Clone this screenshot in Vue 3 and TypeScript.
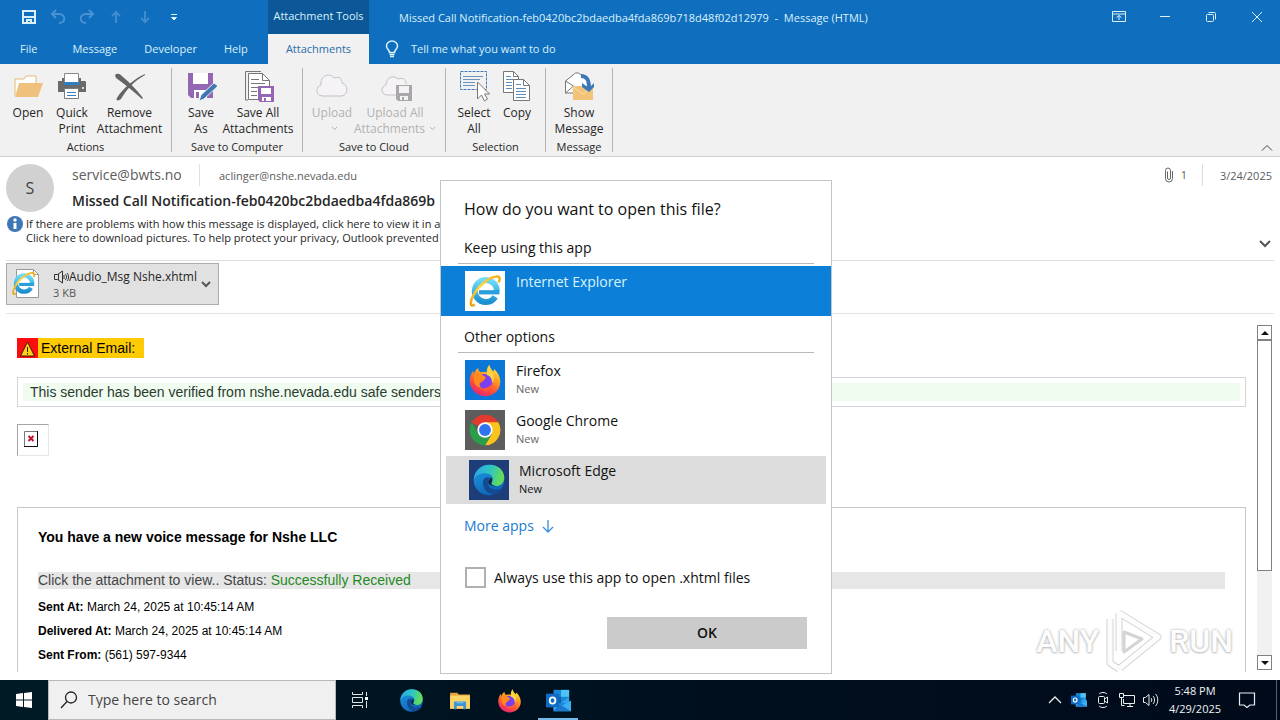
<script setup lang="ts">
import { ref } from 'vue'

interface RibbonItem {
  icon: string
  lines: string[]
  arrow?: boolean
  disabled?: boolean
}
interface RibbonGroup {
  id: string
  title: string
  items: RibbonItem[]
}
interface AppChoice {
  icon: string
  name: string
  hovered?: boolean
}

const tabs: string[] = ['File', 'Message', 'Developer', 'Help']

const groups: RibbonGroup[] = [
  {
    id: 'actions',
    title: 'Actions',
    items: [
      { icon: 'open', lines: ['Open'] },
      { icon: 'print', lines: ['Quick', 'Print'] },
      { icon: 'remove', lines: ['Remove', 'Attachment'] },
    ],
  },
  {
    id: 'computer',
    title: 'Save to Computer',
    items: [
      { icon: 'save', lines: ['Save', 'As'] },
      { icon: 'saveall', lines: ['Save All', 'Attachments'] },
    ],
  },
  {
    id: 'cloud',
    title: 'Save to Cloud',
    items: [
      { icon: 'upload', lines: ['Upload', ''], arrow: true, disabled: true },
      { icon: 'uploadall', lines: ['Upload All', 'Attachments'], arrow: true, disabled: true },
    ],
  },
  {
    id: 'selection',
    title: 'Selection',
    items: [
      { icon: 'select', lines: ['Select', 'All'] },
      { icon: 'copy', lines: ['Copy'] },
    ],
  },
  {
    id: 'message',
    title: 'Message',
    items: [{ icon: 'show', lines: ['Show', 'Message'] }],
  },
]

const details = [
  { label: 'Sent At:', value: 'March 24, 2025 at 10:45:14 AM' },
  { label: 'Delivered At:', value: 'March 24, 2025 at 10:45:14 AM' },
  { label: 'Sent From:', value: '(561) 597-9344' },
]

const otherApps: AppChoice[] = [
  { icon: 'firefox', name: 'Firefox' },
  { icon: 'chrome', name: 'Google Chrome' },
  { icon: 'edge', name: 'Microsoft Edge', hovered: true },
]

const pinned = [
  { icon: 'edge', name: 'Microsoft Edge' },
  { icon: 'folder', name: 'File Explorer' },
  { icon: 'firefox', name: 'Firefox' },
  { icon: 'outlook', name: 'Outlook', active: true },
]

const always = ref(false)
const query = ref('')
</script>

<template>
  <div class="desktop">
    <svg class="defs" width="0" height="0" aria-hidden="true">
      <defs>
        <linearGradient id="edgeTop" x1="0" y1="0.4" x2="1" y2="0.6">
          <stop offset="0" stop-color="#2aa9e6" />
          <stop offset="0.5" stop-color="#2fc5c0" />
          <stop offset="0.9" stop-color="#62dc5c" />
        </linearGradient>
        <linearGradient id="edgeBase" x1="0" y1="0" x2="0.6" y2="1">
          <stop offset="0" stop-color="#1d9de3" />
          <stop offset="1" stop-color="#0f62b6" />
        </linearGradient>
        <linearGradient id="foxBody" x1="0.8" y1="0" x2="0.3" y2="1">
          <stop offset="0" stop-color="#fff14a" />
          <stop offset="0.35" stop-color="#ffa51f" />
          <stop offset="0.7" stop-color="#ff4f38" />
          <stop offset="1" stop-color="#e8217a" />
        </linearGradient>
        <linearGradient id="ieBody" x1="0" y1="0" x2="0" y2="1">
          <stop offset="0" stop-color="#6fdcf8" />
          <stop offset="1" stop-color="#1c8fd0" />
        </linearGradient>
        <linearGradient id="ieRing" x1="0" y1="1" x2="1" y2="0">
          <stop offset="0" stop-color="#e9a412" />
          <stop offset="0.5" stop-color="#ffd94a" />
          <stop offset="1" stop-color="#f0ae1c" />
        </linearGradient>
      </defs>
      <symbol id="edge" viewBox="0 0 40 40">
        <circle cx="20" cy="20" r="18" fill="url(#edgeBase)" />
        <path d="M13 21c-1 9 5 16 13 16 5-1 9-4 11-8-7 4-16 3-18-4-1-3 0-6 2-8-4-1-7 1-8 4z" fill="#134a92" />
        <path d="M2 20C3 9 11 2 21 2c10 0 17 7 17 15 0 7-5 10-10 10-4 0-6-2-5-4 4-5 0-11-8-11C8 12 4 15 2 20z" fill="url(#edgeTop)" />
        <path d="M23 23c-1 2 1 4 5 4-4 1-8-1-9-4 0-3 2-5 4-6 1 2 1 4 0 6z" fill="#0b2740" />
      </symbol>
      <symbol id="firefox" viewBox="0 0 40 40">
        <path d="M25 2c1 4 3 6 5 8l1-3c5 5 7 10 7 15 0 10-8 17-18 17S2 31 2 21c0-5 2-9 4-12l1 4c1-3 2-5 5-7 0 3 1 4 3 5 2-1 5-1 7 0 0-4 1-7 3-9z" fill="url(#foxBody)" />
        <path d="M14 15c6-5 15-1 15 7 0 6-5 9-9 9-6 0-10-5-9-9 2 2 4 2 6 0l3-3c-1-1-4-1-6-4z" fill="#7a3ff0" />
        <path d="M7 14c3-2 6-2 9 0 2 1 4 1 5 3 0 2-5 2-6 5-2 2-2 5 1 7-6 0-9-5-9-9z" fill="#ff8a1e" />
        <path d="M14 29c6 2 13-1 15-6 1 7-5 11-10 10-2-1-4-2-5-4z" fill="#ff5a36" />
        <path d="M22 14c4 1 7 5 6 10 3-3 3-8 1-12-2-2-4-3-4-6-2 3-3 5-3 8z" fill="#ffe24a" opacity="0.8" />
      </symbol>
      <symbol id="chrome" viewBox="0 0 40 40">
        <path d="M20 20 4.400 11A18 18 0 0 1 35.600 11z" fill="#e33b2e" />
        <path d="M20 11h15.600A18 18 0 0 1 20 38l8-13z" fill="#fcc31e" />
        <path d="M4.400 11 12.200 24.500 20 29l7.800-4.500L20 38A18 18 0 0 1 4.400 11z" fill="#2a9d48" />
        <circle cx="20" cy="20" r="9" fill="#fff" />
        <circle cx="20" cy="20" r="7" fill="#2f74ee" />
      </symbol>
      <symbol id="ie" viewBox="0 0 40 40">
        <path d="M32 27a13 13 0 1 1 2-7" fill="none" stroke="url(#ieBody)" stroke-width="7" />
        <path d="M13 21.500h24" stroke="#2b9fdb" stroke-width="5" />
        <path d="M8 36c-6 4-6-4-1-12C13 13 25 4 33 3c5-1 5 3 3 7" fill="none" stroke="url(#ieRing)" stroke-width="3" />
      </symbol>
      <symbol id="folder" viewBox="0 0 40 40">
        <path d="M2 6h13l3 3h20v26H2z" fill="#e8a33a" />
        <path d="M2 11h36v24H2z" fill="#fbd667" />
        <path d="M9 36V24q0-2 2-2h18q2 0 2 2v12h-5v-6H14v6z" fill="#3e94d6" />
        <path d="M14 22h12v3H14z" fill="#74bdec" />
      </symbol>
      <symbol id="outlook" viewBox="0 0 40 40">
        <path d="M12 3h25v30H12z" fill="#1a86d8" />
        <path d="M24 3h13v11H24z" fill="#50c3f5" />
        <path d="M12 14h12v10H12z" fill="#0f5fb0" />
        <path d="M24 24h13V14z" fill="#2fa3ea" />
        <path d="M12 37h28V20L26 28 12 22z" fill="#3db1f0" />
        <path d="M12 37h28L22 26z" fill="#1b78cc" />
        <path d="M0 9h21v22H0z" fill="#0f6cc4" />
        <ellipse cx="10.500" cy="20" rx="4.500" ry="5" fill="none" stroke="#fff" stroke-width="3" />
      </symbol>
    </svg>

    <main class="window">
      <header class="titlebar">
        <div class="quick">
          <button type="button" aria-label="Save">
            <svg width="16" height="16" viewBox="0 0 16 16" fill="none" stroke="#d9f1fa" stroke-width="2"><path d="M2 2h12v12H2z" /><path d="M2 8h12" /><path d="M6 14v-3h4v3" /></svg>
          </button>
          <button type="button" aria-label="Undo">
            <svg width="16" height="16" viewBox="0 0 16 16" fill="none" stroke="#4a92d2" stroke-width="2"><path d="M6 1 2 5l4 4M2 5h7c7 0 7 9 0 9" /></svg>
          </button>
          <button type="button" aria-label="Redo">
            <svg width="16" height="16" viewBox="0 0 16 16" fill="none" stroke="#4a92d2" stroke-width="2"><path d="m10 1 4 4-4 4M14 5H7c-7 0-7 9 0 9" /></svg>
          </button>
          <button type="button" aria-label="Previous item">
            <svg width="16" height="16" viewBox="0 0 16 16" fill="none" stroke="#3f8bce" stroke-width="2"><path d="M8 14V3M4 7l4-4 4 4" /></svg>
          </button>
          <button type="button" aria-label="Next item">
            <svg width="16" height="16" viewBox="0 0 16 16" fill="none" stroke="#3f8bce" stroke-width="2"><path d="M8 2v11M4 9l4 4 4-4" /></svg>
          </button>
          <button type="button" aria-label="Customize toolbar">
            <svg width="16" height="16" viewBox="0 0 16 16"><path d="M5 5.500h6M5.500 8.500h5L8 11z" stroke="#d9f1fa" fill="#d9f1fa" /></svg>
          </button>
        </div>
        <div class="context">Attachment Tools</div>
        <h1 class="caption">Missed Call Notification-feb0420bc2bdaedba4fda869b718d48f02d12979&nbsp; -&nbsp; Message (HTML)</h1>
        <div class="winbuttons">
          <button type="button" aria-label="Ribbon display options">
            <svg width="14" height="12" viewBox="0 0 14 12" fill="none" stroke="#d9f1fa"><path d="M.5.500h13v10H.500zM.5 3h13M7 9V4.500M4.500 6.500 7 4.500l2.500 2" /></svg>
          </button>
          <button type="button" aria-label="Minimize">
            <svg width="12" height="12" viewBox="0 0 12 12" stroke="#d9f1fa"><path d="M1 5.500h10" /></svg>
          </button>
          <button type="button" aria-label="Restore">
            <svg width="12" height="12" viewBox="0 0 12 12" fill="none" stroke="#d9f1fa"><rect x="1.500" y="3.500" width="7" height="7" rx="1" /><path d="M3.500 1.500h6q1 0 1 1v6" /></svg>
          </button>
          <button type="button" aria-label="Close">
            <svg width="12" height="12" viewBox="0 0 12 12" stroke="#d9f1fa"><path d="m1 1 10 10M11 1 1 11" /></svg>
          </button>
        </div>
      </header>

      <nav class="tabs">
        <div class="tabset">
          <button v-for="t in tabs" :key="t" type="button" class="tab">{{ t }}</button>
        </div>
        <button type="button" class="current">Attachments</button>
        <button type="button" class="tell">
          <svg width="14" height="18" viewBox="0 0 14 18" fill="none" stroke="#d9f1fa" stroke-width="1.500"><path d="M4.500 12.500c0-2.500-3-3.500-3-6.500a5.500 5 0 0 1 11 0c0 3-3 4-3 6.500zM4.500 14.500h5M5 16.500h4" /></svg>
          Tell me what you want to do
        </button>
      </nav>

      <section class="ribbon">
        <div v-for="g in groups" :key="g.id" class="group" :class="g.id">
          <div class="items">
            <button v-for="i in g.items" :key="i.icon" type="button" class="item" :disabled="i.disabled">
              <svg width="32" height="32" viewBox="0 0 32 32" fill="none">
                <template v-if="i.icon === 'open'">
                  <path d="M3 26V9h9l2-3h10v9" fill="#fff" stroke="#e5b878" />
                  <path d="M7 13h24l-5 14H3z" fill="#efc17c" />
                </template>
                <template v-else-if="i.icon === 'print'">
                  <path d="M8.500 3.500h14v9h-14z" fill="#fff" stroke="#8a8a8a" />
                  <path d="M2 11h4V8h2v4h15V8h2v3h4q1 0 1 1v10H2z" fill="#6a6a6a" />
                  <path d="M8 12h15v3H8z" fill="#2f7dc4" />
                  <path d="M8.500 18.500h14v10h-14z" fill="#fff" stroke="#7a7a7a" />
                  <path d="M11 22.500h9M11 25.500h9" stroke="#3a7cc0" />
                  <circle cx="27" cy="18" r="1" fill="#fff" />
                </template>
                <template v-else-if="i.icon === 'remove'">
                  <path d="M1 5c3-3 6 0 8 2 7 6 13 12 20 21l-1 1C20 22 12 15 2 8z" fill="#646464" />
                  <path d="M31 4C20 9 8 19 3 28c-2 3 2 3 4 1C12 20 20 11 31 5z" fill="#646464" />
                </template>
                <template v-else-if="i.icon === 'save'">
                  <path d="M3 3h25v25H6l-3-3z" fill="#9466b4" />
                  <path d="M8 3h15v11H8z" fill="#fff" />
                  <path d="M9 20h13v8H9z" fill="#fff" />
                  <path d="M11 22h3v6h-3z" fill="#9466b4" />
                  <path d="m29 13 4 3-14 13-5 2 2-6z" fill="#3f79b3" stroke="#f1f1f1" />
                </template>
                <template v-else-if="i.icon === 'saveall'">
                  <path d="M6 30H3.500V1.500H19" stroke="#777" />
                  <path d="M6.500 3.500h14l7 7v19h-21z" fill="#fff" stroke="#777" />
                  <path d="M20.500 3.500v7h7M9 9.500h8M9 13.500h14M9 17.500h8M9 21.500h6M9 25.500h6" stroke="#777" />
                  <path d="M16 16h16v16H18l-2-2z" fill="#9466b4" />
                  <path d="M19 18h10v6H19zM20 27h9v4h-9z" fill="#fff" />
                  <path d="M22 28h2v4h-2z" fill="#9466b4" />
                </template>
                <template v-else-if="i.icon === 'upload'">
                  <path d="M6 26C-1 25 0 16 5 15 4 6 13 2 18 8c6-2 8 1 8 5 7 2 6 12 0 13z" fill="#f5f3f6" stroke="#c6c0c8" />
                </template>
                <template v-else-if="i.icon === 'uploadall'">
                  <path d="M17 25H8c-7-1-6-9-1-10C7 8 14 4 19 9c6-2 8 1 8 5" fill="#f5f3f6" stroke="#c6c0c8" />
                  <path d="M17 15h16v16H19l-2-2z" fill="#aaa6ab" />
                  <path d="M20 16h10v7H20zM21 26h8v4h-8z" fill="#f3f3f3" />
                  <path d="M23 27h2v4h-2z" fill="#aaa6ab" />
                </template>
                <template v-else-if="i.icon === 'select'">
                  <path d="M2.500 1.500h26v18h-26z" stroke="#3f78b4" stroke-dasharray="3 1" />
                  <path d="M5 6.500h20M5 9.500h17M5 12.500h12M5 15.500h12" stroke="#6c94bd" />
                  <path d="M19.500 12v17l4-4 3 6 3-2-3-5h5z" fill="#fff" stroke="#777" />
                </template>
                <template v-else-if="i.icon === 'copy'">
                  <path d="M2.500 1.500h10l5 5v16h-15z" fill="#fff" stroke="#777" />
                  <path d="M12.500 1.500v5h5" stroke="#777" />
                  <path d="M5 6.500h5M5 9.500h8M5 12.500h6M5 15.500h6M5 18.500h6" stroke="#5b8cbd" />
                  <path d="M12.500 9.500h10l6 6v15h-16z" fill="#fff" stroke="#777" />
                  <path d="M22.500 9.500v6h6" stroke="#777" />
                  <path d="M15 14.500h5M15 18.500h10M15 21.500h10M15 24.500h10M15 27.500h10" stroke="#5b8cbd" />
                </template>
                <template v-else>
                  <path d="M2.500 23V11l10-8h3l9 7v13z" fill="#fff" stroke="#777" />
                  <path d="m2.500 23 8-7M2.500 11l8 5" stroke="#777" />
                  <path d="M10 16h20v14H10z" fill="#f3c478" />
                  <path d="m10 17 10 7 10-7" stroke="#f8dca8" />
                  <path d="M18 6c6 0 8 4 8 12" stroke="#3a78b8" stroke-width="4" />
                  <path d="m19 13 7 5 5-5v4l-5 5-7-5z" fill="#3a78b8" />
                </template>
              </svg>
              <span v-for="(l, n) in i.lines" :key="n" class="line">{{ l }}<svg v-if="i.arrow && n === 1" class="drop" width="7" height="5" viewBox="0 0 7 5"><path d="m1 1 2.500 2.500L6 1" fill="none" stroke="currentColor" /></svg></span>
            </button>
          </div>
          <div class="grouptitle">{{ g.title }}</div>
        </div>
        <button type="button" class="collapse" aria-label="Collapse the ribbon">
          <svg width="12" height="8" viewBox="0 0 12 8" fill="none" stroke="#444"><path d="m1 6.500 5-5 5 5" /></svg>
        </button>
      </section>

      <section class="mailhead">
        <div class="avatar">S</div>
        <div class="people">
          <div class="fromline">
            <span class="from">service@bwts.no</span>
            <span class="to">aclinger@nshe.nevada.edu</span>
            <span class="count">
              <svg width="10" height="16" viewBox="0 0 10 16" fill="none" stroke="#666"><path d="M3.500 4.500v6.500a1.500 1.500 0 0 0 3 0V3.500a2.500 2.500 0 0 0-5 0v8a3.500 3.500 0 0 0 7 0V4" /></svg>
              1
            </span>
            <time class="date">3/24/2025</time>
          </div>
          <h2 class="subject">Missed Call Notification-feb0420bc2bdaedba4fda869b</h2>
        </div>
      </section>
      <section class="info">
        <svg width="18" height="18" viewBox="0 0 18 18"><circle cx="9" cy="9" r="8" fill="#3f76b5" /><path d="M9 8v6" stroke="#fff" stroke-width="3" /><circle cx="9" cy="5" r="1.700" fill="#fff" /></svg>
        <p>If there are problems with how this message is displayed, click here to view it in a<br />Click here to download pictures. To help protect your privacy, Outlook prevented</p>
        <button type="button" aria-label="Expand header">
          <svg width="12" height="8" viewBox="0 0 12 8" fill="none" stroke="#555" stroke-width="2"><path d="m1 1 5 5 5-5" /></svg>
        </button>
      </section>
      <section class="attachments">
        <button type="button" class="file">
          <svg class="fileicon" width="32" height="32" viewBox="0 0 32 32">
            <path d="M5.500 1.500h17l5 5v23h-22z" fill="#fff" stroke="#999" />
            <path d="M22.500 1.500v5h5" fill="none" stroke="#999" />
            <use href="#ie" x="0" y="3" width="25" height="25" />
          </svg>
          <span class="filetext">
            <span class="filename">
              <svg width="16" height="14" viewBox="0 0 16 14" fill="none" stroke="#333"><path d="M4.500 4.500h-3v5h3l5 3.500V1zM5.500 4v6M12 4c2 1 2 5 0 6M11 5v4M14 3c2 2 2 6 0 8" /></svg>Audio_Msg Nshe.xhtml
            </span>
            <span class="size">3 KB</span>
          </span>
          <svg width="10" height="7" viewBox="0 0 10 7" fill="none" stroke="#555" stroke-width="2"><path d="m1 1 4 4 4-4" /></svg>
        </button>
      </section>

      <section class="reading">
        <article class="mail">
          <p class="external"><svg width="21" height="20" viewBox="0 0 21 20"><path d="M0 0h21v20H0z" fill="#fb0d0d" /><path d="m10.500 4 7 14h-14z" fill="#ffd21a" stroke="#3d1a00" /><path d="M10.500 9v5M10.500 15v1.500" stroke="#3d1a00" /></svg><span>External Email:</span></p>
          <div class="verified"><p>This sender has been verified from nshe.nevada.edu safe senders</p></div>
          <div class="missing">
            <svg width="14" height="16" viewBox="0 0 14 16"><path d="M.5.500h13v15H.500z" fill="#fff" stroke="#777" /><path d="M0 15.500h13.500V0" fill="none" stroke="#111" /><path d="m4.500 5 5 5M9.500 5l-5 5" stroke="#c0142c" stroke-width="2" /></svg>
          </div>
          <div class="voice">
            <h3>You have a new voice message for Nshe LLC</h3>
            <p class="status">Click the attachment to view.. Status: <span>Successfully Received</span></p>
            <p v-for="d in details" :key="d.label" class="detail"><b>{{ d.label }}</b> {{ d.value }}</p>
          </div>
        </article>
        <div class="scroll">
          <button type="button" aria-label="Scroll up"><svg width="8" height="4" viewBox="0 0 8 4"><path d="M4 0 8 4H0z" fill="#111" /></svg></button>
          <div class="thumb"></div>
          <div class="track"></div>
          <button type="button" aria-label="Scroll down"><svg width="8" height="4" viewBox="0 0 8 4"><path d="M0 0h8L4 4z" fill="#111" /></svg></button>
        </div>
      </section>

      <div class="watermark">
        <span>ANY</span>
        <svg width="58" height="64" viewBox="0 0 58 64" fill="none" stroke-linejoin="round">
          <g stroke="#d4d4d4" stroke-width="7"><path d="M14 4v38M14 4l39 24-38 31M5 10v44l9 6" /><path d="M19 23v20l18-13z" stroke-width="3" /></g>
          <g stroke="#fdfdfd" stroke-width="5"><path d="M14 4v38M14 4l39 24-38 31M5 10v44l9 6" /></g>
        </svg>
        <span>RUN</span>
      </div>
    </main>

    <div class="dialog" role="dialog" aria-labelledby="ask">
      <h2 id="ask">How do you want to open this file?</h2>
      <h3>Keep using this app</h3>
      <button type="button" class="app chosen">
        <span class="tile ie"><svg width="34" height="34"><use href="#ie" /></svg></span>
        <span class="appname">Internet Explorer</span>
      </button>
      <h3 class="second">Other options</h3>
      <button v-for="a in otherApps" :key="a.name" type="button" class="app" :class="{ hovered: a.hovered }">
        <span class="tile" :class="a.icon"><svg width="34" height="34"><use :href="'#' + a.icon" /></svg></span>
        <span class="appname">{{ a.name }}<small>New</small></span>
      </button>
      <a href="#" class="more">More apps
        <svg width="12" height="14" viewBox="0 0 12 14" fill="none" stroke="#3a8ed8" stroke-width="1.300"><path d="M6 1v12M1 8l5 5 5-5" /></svg>
      </a>
      <label class="always"><input v-model="always" type="checkbox" />Always use this app to open .xhtml files</label>
      <button type="button" class="ok">OK</button>
    </div>

    <footer class="taskbar">
      <button type="button" class="start" aria-label="Start">
        <svg width="16" height="16" viewBox="0 0 16 16" fill="#fff"><path d="m0 2 7-1v6.500H0zM8 1l8-1v7.500H8zM0 8.500h7V15l-7-1zM8 8.500h8V16l-8-1z" /></svg>
      </button>
      <label class="search">
        <svg width="18" height="18" viewBox="0 0 18 18" fill="none" stroke="#222"><circle cx="11" cy="6.500" r="5.500" stroke-width="1.300" /><path d="m7 10.500-6 6.500" stroke-width="1.300" /></svg>
        <input v-model="query" type="text" placeholder="Type here to search" aria-label="Type here to search" />
      </label>
      <button type="button" class="pin view" aria-label="Task View">
        <svg width="18" height="18" viewBox="0 0 18 18" fill="none" stroke="#dfe6ea"><path d="M1.500 1v2.500h10V1M1.500 17v-2.500h10V17M1.500 6.500h10v5h-10zM15.500 1v4M15.500 10v7" /><path d="M14 6h3v3h-3z" fill="#fff" stroke="none" /></svg>
      </button>
      <button v-for="p in pinned" :key="p.name" type="button" class="pin" :class="{ active: p.active }" :aria-label="p.name">
        <svg :width="p.icon === 'folder' ? 22 : 25" height="25"><use :href="'#' + p.icon" /></svg>
      </button>
      <div class="tray">
        <svg width="24" height="16" viewBox="0 0 24 16" fill="none" stroke="#e8edf0" stroke-width="1.300"><path d="m6 11 6-6 6 6" /></svg>
        <svg width="24" height="16" viewBox="0 0 24 16"><use href="#outlook" x="4" y="0" width="16" height="16" /></svg>
        <svg width="24" height="18" viewBox="0 0 24 18" fill="none" stroke="#e8edf0"><rect x="7.500" y="5.500" width="6" height="7" rx="1" /><path d="m13.500 8 3-2v6l-3-2M8 3c2-2 6-2 8 0M8 15c2 2 6 2 8 0" /></svg>
        <svg width="24" height="16" viewBox="0 0 24 16" fill="none" stroke="#e8edf0"><path d="M9 3.500h10.500v8H8.500V7M12 14.500h6M15 11.500v3M4.500 1.500h4v4h-4zM6.500 5.500v8h3" /></svg>
        <svg width="24" height="16" viewBox="0 0 24 16" fill="none" stroke="#e8edf0"><path d="M4.500 5.500h2L10 2.500v11l-3.500-3h-2zM12 6c1 1 1 3 0 4M14 4c2 2 2 6 0 8M16.500 2c3 3 3 9 0 12" /></svg>
        <time class="clock">5:48 PM<br />4/29/2025</time>
        <button type="button" aria-label="Notifications">
          <svg width="18" height="16" viewBox="0 0 18 16" fill="none" stroke="#e8edf0" stroke-width="1.200"><path d="M1.500 1h15v12H12l-3 2.500L6 13H1.500z" /></svg>
        </button>
      </div>
    </footer>
  </div>
</template>

<style>
body {
  margin: 0;
}
</style>

<style scoped>
* {
  box-sizing: border-box;
}
h1, h2, h3, p {
  margin: 0;
  font-weight: 400;
}
button {
  border: 0;
  padding: 0;
  background: none;
  color: inherit;
  font: inherit;
}
svg {
  flex: none;
}
.defs {
  position: absolute;
}
.desktop {
  position: relative;
  display: flex;
  flex-direction: column;
  min-height: 100vh;
  background: #fff;
  color: #262626;
  font-family: "Open Sans", "Noto Sans", sans-serif;
  font-size: 11px;
  line-height: 16px;
}
.window {
  position: relative;
  flex: 1;
  display: flex;
  flex-direction: column;
}
.titlebar {
  display: flex;
  align-items: center;
  height: 34px;
  background: #106ebe;
  color: #d9f1fa;
}
.quick {
  display: flex;
  gap: 13px;
  width: 268px;
  padding-left: 21px;
}
.quick button {
  display: flex;
}
.context {
  width: 101px;
  height: 34px;
  background: #0b5798;
  line-height: 32px;
  text-align: center;
  white-space: nowrap;
}
.caption {
  flex: 1;
  padding: 2px 0 0 30px;
  font-size: 11px;
  white-space: nowrap;
}
.winbuttons {
  display: flex;
  height: 30px;
}
.winbuttons button {
  display: flex;
  align-items: center;
  justify-content: center;
  width: 46px;
}
.tabs {
  display: flex;
  height: 30px;
  background: #106ebe;
  color: #d9f1fa;
}
.tabset {
  display: flex;
  gap: 27px;
  width: 268px;
  padding-left: 20px;
}
.tab:first-child {
  margin-right: 8px;
}
.current {
  width: 101px;
  background: #f1f1f1;
  color: #2a6cab;
}
.tell {
  display: flex;
  align-items: center;
  gap: 12px;
  padding-left: 16px;
}
.ribbon {
  display: flex;
  height: 93px;
  padding: 4px 0;
  border-bottom: 1px solid #cfcfcf;
  background: #f1f1f1;
}
.group {
  display: flex;
  flex-direction: column;
  justify-content: space-between;
  border-right: 1px solid #b4b4b4;
}
.items {
  display: grid;
  padding: 2px 8px 0;
}
.actions .items {
  grid-template-columns: 40px 48px 67px;
}
.computer .items {
  grid-template-columns: 42px 72px;
}
.cloud .items {
  grid-template-columns: 42px 84px;
}
.selection .items {
  grid-template-columns: 40px 46px;
  padding-right: 5px;
}
.message .items {
  grid-template-columns: 50px;
}
.item {
  display: flex;
  flex-direction: column;
  align-items: center;
  font-size: 12px;
  white-space: nowrap;
}
.item > svg {
  margin-bottom: 3px;
  overflow: visible;
}
.item:disabled {
  color: #b1b1b1;
}
.line {
  height: 16px;
}
.drop {
  margin-left: 4px;
  vertical-align: 2px;
}
.grouptitle {
  line-height: 10px;
  text-align: center;
}
.collapse {
  align-self: flex-end;
  margin-left: auto;
  padding-right: 7px;
}
.collapse svg {
  display: block;
}
.mailhead {
  display: flex;
  gap: 18px;
  height: 58px;
  padding: 7px 8px 0 6px;
}
.avatar {
  flex: none;
  width: 48px;
  height: 48px;
  border-radius: 50%;
  background: #d1d1d1;
  color: #444;
  font-size: 16px;
  line-height: 48px;
  text-align: center;
}
.people {
  flex: 1;
}
.fromline {
  display: flex;
  height: 22px;
  color: #5c5c5c;
  line-height: 24px;
}
.from {
  width: 128px;
  border-right: 1px solid #e1e1e1;
  font-size: 14px;
  line-height: 22px;
}
.to {
  flex: 1;
  padding-left: 19px;
}
.count {
  display: flex;
  align-items: center;
  gap: 7px;
  padding-right: 15px;
  border-right: 1px solid #dcdcdc;
}
.date {
  width: 69px;
  text-align: right;
}
.subject {
  margin-top: 4px;
  font-size: 14px;
  font-weight: 600;
  line-height: 22px;
}
.info {
  display: flex;
  gap: 2px;
  height: 46px;
  margin: 0 6px;
  border-bottom: 1px solid #dedede;
}
.info p {
  flex: 1;
  padding-top: 2px;
  line-height: 14px;
}
.info button {
  display: flex;
  padding: 25px 3px 0;
}
.attachments {
  height: 53px;
  margin: 0 6px;
  padding-top: 2px;
  border-bottom: 1px solid #e4e4e4;
}
.file {
  display: flex;
  align-items: center;
  width: 213px;
  height: 42px;
  padding: 0 7px 0 4px;
  border: 1px solid #adadad;
  background: #e1e1e1;
  text-align: left;
}
.filetext {
  flex: 1;
  display: grid;
  padding: 1px 0 0 10px;
  font-size: 12px;
}
.filename {
  display: flex;
  align-items: center;
  height: 16px;
  white-space: nowrap;
}
.size {
  color: #555;
  font-size: 11px;
}
.reading {
  flex: 1;
  display: flex;
  gap: 11px;
  padding: 11px 8px 8px 17px;
  font-family: "Liberation Sans", Arial, sans-serif;
  color: #000;
}
.mail {
  flex: 1;
  display: flex;
  flex-direction: column;
}
.external {
  display: flex;
  align-self: flex-start;
  height: 20px;
  margin-top: 13px;
  padding-right: 9px;
  background: #ffcb05;
  font-size: 14px;
  line-height: 21px;
}
.external span {
  padding-left: 3px;
}
.verified {
  height: 30px;
  margin-top: 19px;
  padding: 5px;
  border: 1px solid #d5d5d5;
}
.verified p {
  padding-left: 7px;
  background: #f0fcf0;
  color: #2b3b30;
  font-size: 14px;
  line-height: 18px;
}
.missing {
  width: 32px;
  height: 32px;
  margin-top: 17px;
  padding: 6px;
  border: 1px solid #e6e6e6;
  border-top-color: #a5a5a5;
  border-left-color: #a5a5a5;
}
.missing svg {
  display: block;
}
.voice {
  flex: 1;
  margin-top: 51px;
  padding: 19px 20px 0;
  border: 1px solid #c9c9c9;
  border-bottom: 0;
  font-size: 12px;
}
.voice h3 {
  font-size: 14px;
  font-weight: 700;
  line-height: 20px;
}
.status {
  margin: 25px 0 6px;
  background: #e6e6e6;
  color: #444;
  font-size: 14px;
  line-height: 17px;
}
.status span {
  color: #1f8a24;
}
.detail {
  line-height: 24px;
}
.scroll {
  display: flex;
  flex-direction: column;
  width: 15px;
  margin-bottom: 2px;
}
.scroll button {
  display: flex;
  align-items: center;
  justify-content: center;
  height: 15px;
  border: 1px solid #808080;
}
.thumb {
  flex: 230;
  border: 1px solid #808080;
}
.track {
  flex: 85;
  background: #f1f1f1;
}
.watermark {
  position: absolute;
  right: 47px;
  bottom: 7px;
  display: flex;
  align-items: center;
  gap: 6px;
  color: #fdfdfd;
  font-family: Roboto, sans-serif;
  font-size: 32px;
  font-weight: 500;
  line-height: 40px;
  text-shadow: 0 0 3px #a8a8a8, 0 1px 2px #cfcfcf;
}
.dialog {
  position: absolute;
  top: 180px;
  left: calc(50% - 200px);
  display: flex;
  flex-direction: column;
  width: 392px;
  padding: 16px 0 24px;
  border: 1px solid #c5c5c5;
  background: #fff;
  color: #111;
  font-size: 14px;
  line-height: 20px;
}
.dialog h2 {
  margin: 0 23px 17px;
  font-size: 16px;
  line-height: 24px;
}
.dialog h3 {
  margin: 0 17px 2px;
  padding: 0 6px 5px;
  border-bottom: 1px solid #b9b9b9;
  font-size: 14px;
}
.dialog .second {
  margin-top: 11px;
}
.app {
  display: flex;
  gap: 11px;
  height: 50px;
  padding: 5px 24px;
  text-align: left;
}
.chosen {
  background: #0c80d9;
  color: #d9f3fb;
}
.hovered {
  gap: 10px;
  height: 48px;
  margin: 1px 5px;
  padding: 4px 23px;
  background: #dcdcdc;
}
.tile {
  display: flex;
  align-items: center;
  justify-content: center;
  width: 40px;
  height: 40px;
}
.tile.ie {
  background: #fff;
}
.tile.firefox {
  background: #0a76d8;
}
.tile.chrome {
  background: #5d5d5d;
}
.tile.edge {
  background: #1e3c78;
}
.appname {
  padding-top: 1px;
}
.appname small {
  display: block;
  color: #666;
  font-size: 11px;
  line-height: 16px;
}
.hovered small {
  color: #111;
}
.more {
  display: flex;
  align-items: center;
  gap: 8px;
  margin: 11px 23px 31px;
  color: #1a7bd0;
  text-decoration: none;
}
.always {
  display: flex;
  align-items: center;
  gap: 8px;
  margin-left: 24px;
}
.always input {
  appearance: none;
  width: 21px;
  height: 21px;
  margin: 0;
  border: 2px solid #b0b0b0;
  background: #fff;
}
.always input:checked {
  background: #0c80d9;
}
.ok {
  align-self: flex-end;
  width: 200px;
  height: 32px;
  margin: 29px 24px 0;
  background: #cbcbcb;
  font-weight: 600;
}
.taskbar {
  display: flex;
  height: 40px;
  background: linear-gradient(90deg, #001a26, #00101f 50%, #000a1a);
  color: #eef2f4;
}
.start {
  display: flex;
  align-items: center;
  justify-content: center;
  width: 48px;
}
.search {
  display: flex;
  align-items: center;
  gap: 10px;
  width: 288px;
  padding: 0 11px;
  border: 1px solid #b9b9b9;
  background: #f0f0f0;
}
.search input {
  flex: 1;
  min-width: 0;
  border: 0;
  padding: 0;
  background: none;
  font: inherit;
  font-size: 14px;
  outline: 0;
}
.search input::placeholder {
  color: #444;
  opacity: 1;
}
.pin {
  display: flex;
  align-items: center;
  justify-content: center;
  width: 40px;
  margin: 0 5px 0 4px;
}
.pin.view {
  margin-right: 7px;
}
.pin.active {
  border-bottom: 2px solid #76b9ed;
  padding-top: 2px;
}
.tray {
  display: flex;
  align-items: center;
  margin-left: auto;
  margin-right: 3px;
  padding-right: 20px;
  border-right: 1px solid #55606a;
}
.clock {
  width: 64px;
  text-align: center;
  line-height: 18px;
}
.tray button {
  display: flex;
  padding-left: 11px;
}
</style>
